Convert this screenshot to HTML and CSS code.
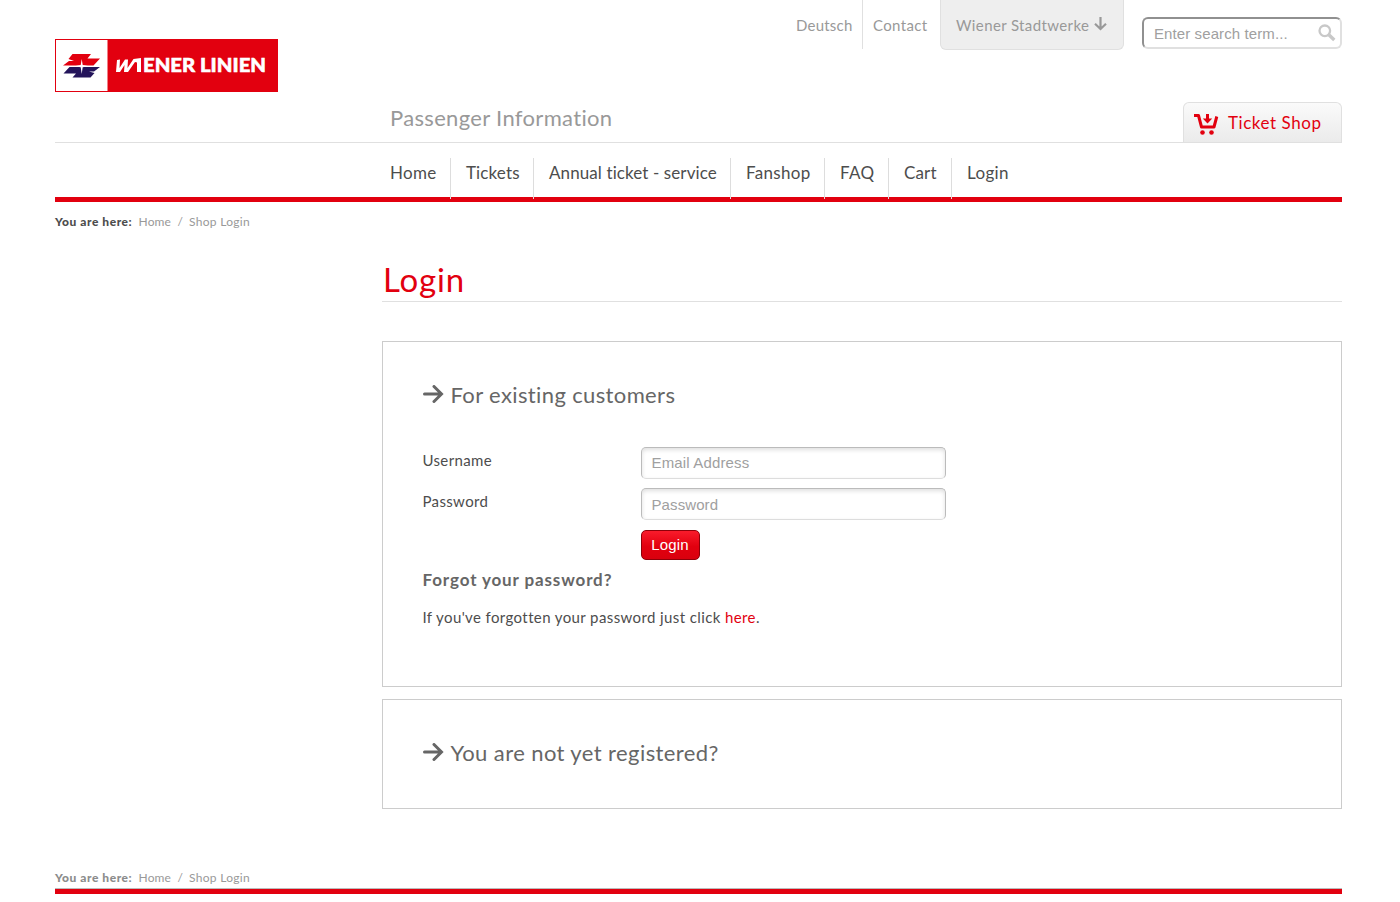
FILE: index.html
```html
<!DOCTYPE html>
<html lang="en">
<head>
<meta charset="utf-8">
<title>Wiener Linien - Login</title>
<link rel="stylesheet" href="styles.css">
</head>
<body>
<div class="page">
  <header class="header">
    <a class="logo">
      <svg width="223" height="53" viewBox="0 0 223 53">
        <rect width="223" height="53" fill="#e2000f"/>
        <rect x="1" y="1" width="51.500" height="51" fill="#fff"/>
        <path d="M17.500 15H36L32.500 19.500H45L38.500 26.500H8L14 22H19L13.500 20Z" fill="#e2000f"/>
        <path d="M14.500 28H45L39 32.500H34L39.500 34L35.500 38.500H17.500L21 34.500H8.500Z" fill="#23145a"/>
        <path d="M26.700 20L27.700 26L34 27.200L27.700 28.200L26.700 35L25.700 28.200L19.500 27.200L25.700 26Z" fill="#fff"/>
        <path d="M62 21L65 20.500L64.500 29L70 20.500H73L72.500 29L78.500 20L86 19V33H82V23.500L80 23L73 33H69L69.500 26L65 33H61Z" fill="#fff"/>
        <text class="logo-text" x="88" y="33" textLength="123" lengthAdjust="spacingAndGlyphs">ENER LINIEN</text>
      </svg>
    </a>
    <div class="header-main">
      <nav class="meta">
        <a class="meta-link meta-lang"><span class="t-deutsch">Deutsch</span></a>
        <a class="meta-link meta-contact"><span class="t-contact">Contact</span></a>
        <a class="meta-group"><span class="t-group">Wiener Stadtwerke</span>
          <svg width="13" height="14" viewBox="0 0 13 14" fill="none" stroke="#999" stroke-width="2.200"><path d="M6.500 0V12M1 6.800L6.500 12L12 6.800"/></svg>
        </a>
        <div class="search"><input type="text" placeholder="Enter search term...">
          <svg width="18" height="18" viewBox="0 0 18 18" fill="none" stroke="#c8c8c8"><circle cx="6.800" cy="6.800" r="5.300" stroke-width="2.300"/><path d="M10.800 10.800L16.300 16" stroke-width="3.400"/></svg>
        </div>
      </nav>
      <div class="title-row">
        <div class="site-title">Passenger Information</div>
        <a class="shop">
          <svg width="25" height="23" viewBox="0 0 25 23" fill="none" stroke="#e2000f"><path d="M0 2.500H4.500L7.500 14H20L22.800 3.500" stroke-width="3" stroke-linejoin="round"/><path d="M13.500 1V6" stroke-width="3"/><path d="M8.800 5.500H18.200L13.500 10.500Z" fill="#e2000f" stroke="none"/><circle cx="8.500" cy="19.500" r="2.300" fill="#e2000f" stroke="none"/><circle cx="17.500" cy="19.500" r="2.300" fill="#e2000f" stroke="none"/></svg>
          <span class="t-shop">Ticket Shop</span>
        </a>
      </div>
    </div>
  </header>
  <nav class="nav">
    <a class="n-home">Home</a><a class="n-tickets">Tickets</a><a class="n-annual">Annual ticket - service</a><a class="n-fan">Fanshop</a><a class="n-faq">FAQ</a><a class="n-cart">Cart</a><a class="n-login">Login</a>
  </nav>
  <div class="crumbs"><b>You are here:</b><a class="c-home">Home</a><i>/</i><a class="c-shop">Shop Login</a></div>
  <main class="content">
    <h1><span>Login</span></h1>
    <section class="card card-login">
      <h2><svg width="21" height="18" viewBox="0 0 21 18" fill="none" stroke="#666" stroke-width="3"><path d="M1.500 9H18M11 1.500L18.500 9L11 16.500" stroke-linecap="round"/></svg><span class="t-existing">For existing customers</span></h2>
      <form>
        <div class="row"><label class="l-user">Username</label><input class="email" type="text" placeholder="Email Address"></div>
        <div class="row"><label class="l-pass">Password</label><input type="password" placeholder="Password"></div>
        <div class="row row-button"><button type="button">Login</button></div>
      </form>
      <h3><span>Forgot your password?</span></h3>
      <p><span>If you've forgotten your password just click <a>here</a>.</span></p>
    </section>
    <section class="card card-register">
      <h2><svg width="21" height="18" viewBox="0 0 21 18" fill="none" stroke="#666" stroke-width="3"><path d="M1.500 9H18M11 1.500L18.500 9L11 16.500" stroke-linecap="round"/></svg><span class="t-register">You are not yet registered?</span></h2>
    </section>
  </main>
  <div class="crumbs crumbs-bottom"><b>You are here:</b><a class="c-home">Home</a><i>/</i><a class="c-shop">Shop Login</a></div>
</div>
</body>
</html>
```
FILE: styles.css
```css
* { box-sizing: border-box; }
body { margin: 0; background: #fff; color: #4d4d4d; font-family: Lato, sans-serif; font-size: 15px; font-variant-ligatures: none; overflow: hidden; }
span, a, b, label { white-space: nowrap; }
.page { width: 1287px; margin-left: 55px; }
.header { display: flex; height: 143px; border-bottom: 1px solid #e0e0e0; }
.logo { width: 327px; padding-top: 39px; }
.logo svg { display: block; }
.logo-text { font: 900 18px Lato, sans-serif; fill: #fff; stroke: #fff; stroke-width: .5px; }
.header-main { flex: 1; }
.meta { display: flex; justify-content: flex-end; height: 102px; color: #999; font-size: 15px; line-height: 50px; }
.meta-link { height: 49px; letter-spacing: .22px; }
.meta-lang { width: 67px; border-right: 1px solid #e0e0e0; }
.meta-contact { width: 77px; padding-left: 10px; letter-spacing: .35px; }
.meta-group { display: flex; align-items: flex-start; width: 184px; height: 50px; padding-left: 15px; background: #eee; border: solid #e0e0e0; border-width: 0 1px 1px; border-radius: 0 0 6px 6px; letter-spacing: .38px; }
.meta-group span { width: 134px; }
.meta-group svg { margin: 17px 0 0 4px; }
.search { display: flex; align-items: center; width: 200px; height: 32px; margin: 17px 0 0 18px; border: 2px solid; border-color: #909090 #e0e0e0 #e0e0e0 #909090; border-radius: 6px; }
.search input { width: 164px; height: 26px; padding: 0 0 0 10px; border: 0; background: none; font: 15px "Liberation Sans", Arial, sans-serif; letter-spacing: .1px; }
.search svg { margin-left: 10px; }
::placeholder { color: #a0a0a0; opacity: 1; }
.title-row { display: flex; justify-content: space-between; height: 40px; padding-left: 8px; }
.site-title { color: #999; font-size: 22px; line-height: 32px; letter-spacing: .33px; white-space: nowrap; }
.shop { display: flex; width: 159px; height: 40px; padding-left: 10px; color: #e2000f; font-size: 17px; line-height: 39px; letter-spacing: .55px; background: linear-gradient(#fafafa, #ebebeb); border: 1px solid #e0e0e0; border-bottom: 0; border-radius: 6px 6px 0 0; }
.shop svg { margin: 10px 9px 0 0; }
.nav { display: flex; height: 59px; padding: 15px 0 0 320px; border-bottom: 5px solid #e2000f; font-size: 17px; line-height: 29px; letter-spacing: .13px; }
.nav a { height: 41px; padding-left: 15px; border-right: 1px solid #ddd; }
.nav .n-home { width: 76px; letter-spacing: .3px; }
.nav .n-tickets { width: 83px; }
.nav .n-annual { width: 197px; letter-spacing: .1px; }
.nav .n-fan { width: 94px; letter-spacing: .3px; }
.nav .n-faq { width: 64px; letter-spacing: .4px; }
.nav .n-cart { width: 63px; }
.nav .n-login { border: 0; letter-spacing: .35px; }
.crumbs { display: flex; height: 40px; font-size: 12px; line-height: 40px; color: #999; }
.crumbs b { width: 83.500px; color: #4d4d4d; font-weight: 900; letter-spacing: .55px; }
.crumbs .c-home { width: 39px; letter-spacing: .15px; }
.crumbs .c-shop { letter-spacing: .3px; }
.crumbs i { width: 11.500px; font-style: normal; }
.content { display: flex; flex-direction: column; width: 960px; margin-left: 327px; }
h1 { height: 60px; margin: 0 0 39px; padding-left: 1px; border-bottom: 1px solid #e0e0e0; color: #e2000f; font-size: 33px; font-weight: 400; line-height: 74px; letter-spacing: .8px; }
.card { border: 1px solid #ccc; padding: 39px 40px 0 39.500px; }
.card-login { height: 346px; margin-bottom: 12px; }
.card-register { height: 110px; }
h2 { display: flex; height: 30px; margin: 0; color: #666; font-size: 22px; font-weight: 400; line-height: 28px; }
h2 svg { margin: 4px 6.500px 0 .5px; }
.t-existing { letter-spacing: .37px; }
.t-register { letter-spacing: .41px; }
form { padding-top: 36px; }
.row { display: flex; height: 41px; }
.row label { width: 218.500px; line-height: 27px; letter-spacing: .35px; }
.row input { width: 305px; height: 32px; padding: 0 10px 0 9.500px; border: 1px solid #bbb; border-bottom-color: #ddd; border-radius: 5px; box-shadow: inset 0 2px 4px rgba(0,0,0,.13); font: 15px "Liberation Sans", Arial, sans-serif; letter-spacing: .1px; }
.row .email { padding-bottom: 2px; letter-spacing: .15px; }
.row-button { height: 40px; padding: 1px 0 0 218.500px; }
button { width: 59px; height: 30px; padding: 0 1px 2px 0; color: #fff; background: linear-gradient(#f91b2b, #e2000f 55%, #d9000e); border: 1px solid #8e0009; border-radius: 5px; font: 15px "Liberation Sans", Arial, sans-serif; letter-spacing: .15px; }
h3 { height: 22px; margin: 0; color: #666; font-size: 17px; line-height: 22px; letter-spacing: .87px; }
p { margin: 16px 0 0; line-height: 21px; letter-spacing: .39px; }
p a { color: #e2000f; }
.crumbs-bottom { height: 36px; margin-top: 49px; border-bottom: 5px solid #e2000f; box-shadow: inset 0 -1px #bbb; }
.crumbs-bottom b { color: #8c8c8c; }
```
